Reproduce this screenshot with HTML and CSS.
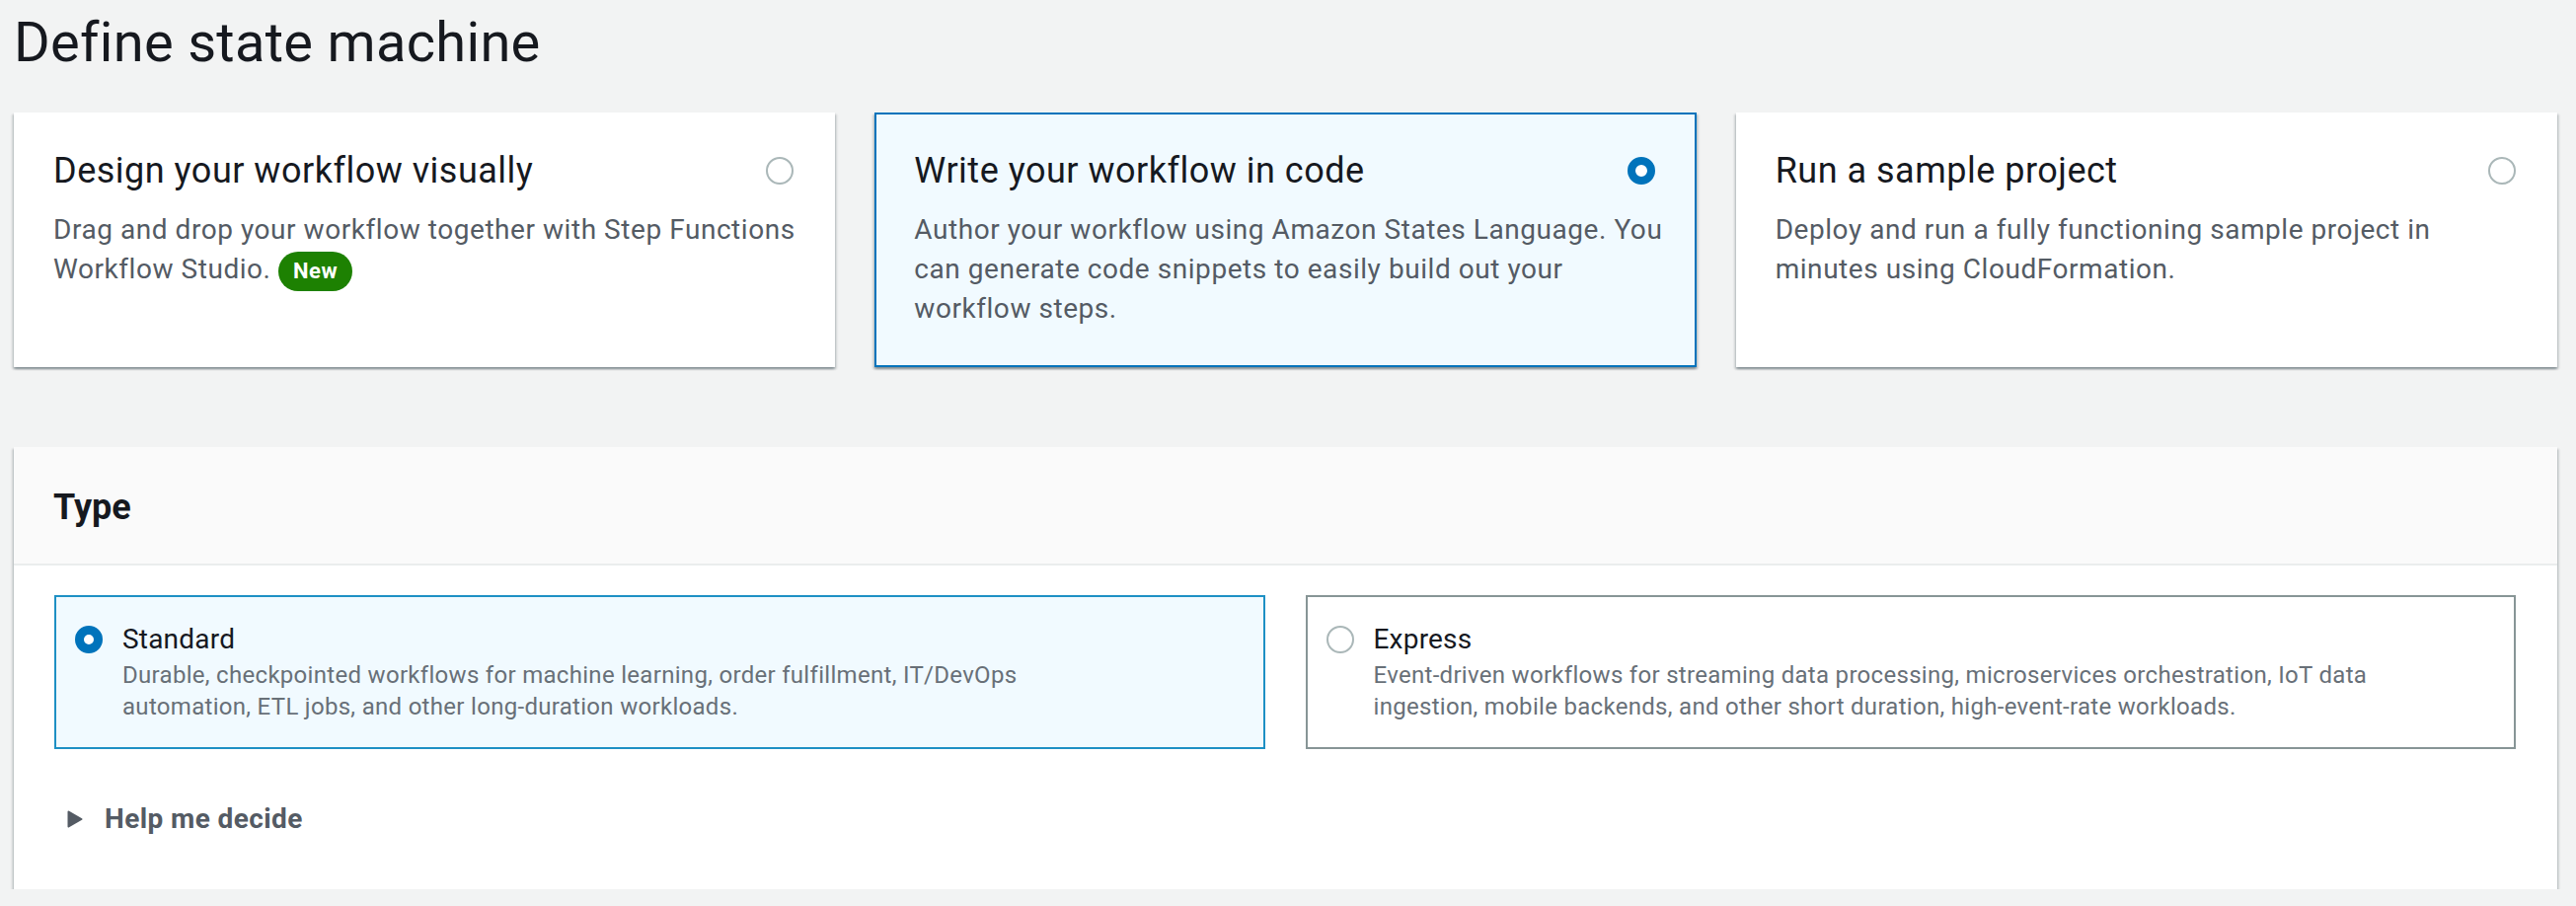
FILE: index.html
```html
<!DOCTYPE html>
<html lang="en">
<head>
<meta charset="utf-8">
<title>Define state machine</title>
<link rel="stylesheet" href="styles.css">
</head>
<body>
<main class="page">
  <h1 class="page-title">Define state machine</h1>

  <div class="cards">
    <div class="card">
      <div class="card-head">
        <span class="card-title">Design your workflow visually</span>
        <span class="radio"></span>
      </div>
      <p class="card-desc">Drag and drop your workflow together with Step Functions Workflow Studio. <span class="badge">New</span></p>
    </div>
    <div class="card selected">
      <div class="card-head">
        <span class="card-title">Write your workflow in code</span>
        <span class="radio checked"></span>
      </div>
      <p class="card-desc">Author your workflow using Amazon States Language. You can generate code snippets to easily build out your workflow steps.</p>
    </div>
    <div class="card">
      <div class="card-head">
        <span class="card-title">Run a sample project</span>
        <span class="radio"></span>
      </div>
      <p class="card-desc">Deploy and run a fully functioning sample project in minutes using CloudFormation.</p>
    </div>
  </div>

  <section class="panel">
    <div class="panel-header">
      <h2 class="panel-title">Type</h2>
    </div>
    <div class="panel-body">
      <div class="tiles">
        <div class="tile selected">
          <span class="radio checked tile-radio"></span>
          <div class="tile-text">
            <div class="tile-title">Standard</div>
            <p class="tile-desc">Durable, checkpointed workflows for machine learning, order fulfillment, IT/DevOps automation, ETL jobs, and other long-duration workloads.</p>
          </div>
        </div>
        <div class="tile">
          <span class="radio tile-radio"></span>
          <div class="tile-text">
            <div class="tile-title">Express</div>
            <p class="tile-desc">Event-driven workflows for streaming data processing, microservices orchestration, IoT data ingestion, mobile backends, and other short duration, high-event-rate workloads.</p>
          </div>
        </div>
      </div>
      <div class="help">
        <svg class="caret" width="16" height="18" viewBox="0 0 16 18" aria-hidden="true">
          <polygon points="1.5,1.5 14.5,9 1.5,16.5" fill="#545b64" stroke="#545b64" stroke-width="2" stroke-linejoin="round"/>
        </svg>
        <span>Help me decide</span>
      </div>
    </div>
  </section>
</main>
</body>
</html>
```

FILE: styles.css
```css
html, body {
  margin: 0;
  padding: 0;
}

body {
  background: #f2f3f3;
  font-family: Roboto, "Liberation Sans", Arial, sans-serif;
  color: #16191f;
  overflow: hidden;
}

.page {
  padding: 9px 19px 0 14px;
}

.page-title {
  margin: 0;
  font-size: 56px;
  line-height: 68px;
  font-weight: 400;
  letter-spacing: 0.3px;
  color: #16191f;
}

.cards {
  display: grid;
  grid-template-columns: repeat(3, 1fr);
  gap: 40px;
  margin-top: 37px;
}

.card {
  background: #ffffff;
  border: 2px solid transparent;
  padding: 35px 30px 37px 38px;
  box-shadow: 0 2px 2px 0 rgba(0, 28, 36, 0.3),
              2px 2px 2px 0 rgba(0, 28, 36, 0.12),
              -2px 2px 2px 0 rgba(0, 28, 36, 0.12);
}

.card.selected {
  background: #f1faff;
  border-color: #0073bb;
}

.card-head {
  display: flex;
  align-items: center;
  justify-content: space-between;
  gap: 20px;
}

.card-title {
  font-size: 36px;
  line-height: 44px;
  letter-spacing: 0.5px;
  color: #16191f;
}

.card-desc {
  margin: 18px 0 0;
  font-size: 28px;
  line-height: 40px;
  letter-spacing: 0.55px;
  color: #545b64;
}

.badge {
  display: inline-block;
  vertical-align: baseline;
  height: 40px;
  line-height: 40px;
  padding: 0 15px;
  border-radius: 20px;
  background: #1d8102;
  color: #ffffff;
  font-size: 22px;
  font-weight: 700;
  letter-spacing: 0.5px;
}

.radio {
  flex: none;
  width: 28px;
  height: 28px;
  box-sizing: border-box;
  border-radius: 50%;
  border: 2px solid #aab7b8;
  background: #ffffff;
  margin-right: 10px;
}

.radio.checked {
  border: 8px solid #0073bb;
}

.panel {
  margin-top: 81px;
  background: #ffffff;
  box-shadow: 0 2px 2px 0 rgba(0, 28, 36, 0.3),
              2px 2px 2px 0 rgba(0, 28, 36, 0.12),
              -2px 2px 2px 0 rgba(0, 28, 36, 0.12);
}

.panel-header {
  background: #fafafa;
  border-bottom: 2px solid #eaeded;
  padding: 39px 40px 35px;
}

.panel-title {
  margin: 0;
  font-size: 36px;
  line-height: 44px;
  font-weight: 700;
  color: #16191f;
}

.panel-body {
  padding: 30px 42px 51px 41px;
}

.tiles {
  display: grid;
  grid-template-columns: 1fr 1fr;
  gap: 41px;
}

.tile {
  display: flex;
  align-items: flex-start;
  gap: 20px;
  border: 2px solid #879596;
  padding: 23px 20px 25px 19px;
  background: #ffffff;
}

.tile.selected {
  border-color: #1e90c4;
  background: #f1faff;
}

.tile-radio {
  margin: 6px 0 0 0;
}

.tile-radio.checked {
  border-width: 9px;
}

.tile-title {
  font-size: 28px;
  line-height: 40px;
  letter-spacing: 0.2px;
  color: #16191f;
}

.tile-desc {
  margin: 0;
  max-width: 1030px;
  font-size: 24px;
  line-height: 32px;
  letter-spacing: 0.3px;
  color: #687078;
}

.help {
  display: flex;
  align-items: center;
  gap: 22px;
  margin-top: 51px;
  padding-left: 13px;
  font-size: 28px;
  line-height: 40px;
  font-weight: 700;
  letter-spacing: 0.4px;
  color: #545b64;
}

.caret {
  display: block;
  flex: none;
}
```
